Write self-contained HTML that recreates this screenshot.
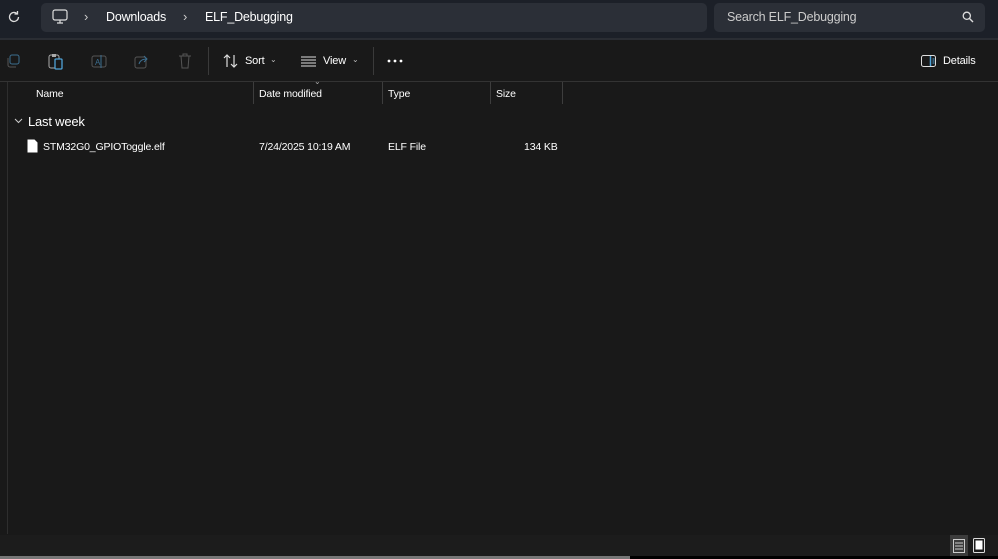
<!DOCTYPE html>
<html><head><style>
*{margin:0;padding:0;box-sizing:border-box}
body{width:998px;height:559px;background:#191919;font-family:"Segoe UI","Liberation Sans",sans-serif;color:#fff;position:relative;overflow:hidden;font-size:11px}
.top{position:absolute;left:0;top:0;width:998px;height:38px;background:#1c2028}
.addr{position:absolute;left:41px;top:3px;width:666px;height:29px;background:#2b2f37;border-radius:5px}
.search{position:absolute;left:714px;top:3px;width:271px;height:29px;background:#2b2f37;border-radius:5px}
.t{position:absolute;white-space:nowrap}
.tb{position:absolute;left:0;top:38px;width:998px;height:44px;background:#191919;border-top:2px solid #2a2d33;border-bottom:1px solid #333}
.sep{position:absolute;width:1px;background:#3a3a3a}
.col{position:absolute;top:82px;width:1px;height:22px;background:#3d3d3d}
.r{font-size:10.5px;letter-spacing:-0.15px}
</style></head><body>
<div class="top"></div>
<svg class="t" style="left:7px;top:10px" width="14" height="14" viewBox="0 0 14 14"><path d="M11.5 7a4.5 4.5 0 1 1-1.4-3.3" stroke="#ddd" stroke-width="1.3" fill="none"/><path d="M10.5 1v3h-3" stroke="#ddd" stroke-width="1.3" fill="none"/></svg>
<div class="addr"></div>
<svg class="t" style="left:52px;top:9px" width="16" height="15" viewBox="0 0 16 15"><rect x="1" y="1" width="14" height="10" rx="2" stroke="#ddd" stroke-width="1.2" fill="none"/><path d="M5 14h6M8 11v3" stroke="#ddd" stroke-width="1.2"/></svg>
<div class="t" style="left:84px;top:9px;font-size:13px;color:#ccc">›</div>
<div class="t" style="left:106px;top:10px;font-size:12.5px;letter-spacing:-0.2px">Downloads</div>
<div class="t" style="left:183px;top:9px;font-size:13px;color:#ccc">›</div>
<div class="t" style="left:205px;top:10px;font-size:12.5px;letter-spacing:-0.2px">ELF_Debugging</div>
<div class="search"></div>
<div class="t" style="left:727px;top:10px;font-size:12.5px;letter-spacing:-0.2px;color:#ccc">Search ELF_Debugging</div>
<svg class="t" style="left:962px;top:11px" width="12" height="12" viewBox="0 0 12 12"><circle cx="4.8" cy="4.8" r="3.6" stroke="#ddd" stroke-width="1.3" fill="none"/><path d="M7.5 7.5L11 11" stroke="#ddd" stroke-width="1.4"/></svg>
<div class="tb"></div>
<svg class="t" style="left:6px;top:54px" width="14" height="14"><rect x="4" y="1" width="9" height="9" rx="2" stroke="#3c6e8f" fill="none"/><path d="M2 4v7a2 2 0 0 0 2 2h6" stroke="#555" fill="none"/></svg>
<svg class="t" style="left:48px;top:53px" width="16" height="17"><rect x="1" y="2" width="10" height="13" rx="2" stroke="#aaa" fill="none"/><rect x="4" y="1" width="4" height="3" fill="#aaa"/><rect x="7" y="6" width="7" height="10" rx="1" stroke="#4fa3d8" stroke-width="1.3" fill="#191919"/></svg>
<svg class="t" style="left:91px;top:54px" width="16" height="15"><rect x="1" y="2" width="14" height="11" rx="2" stroke="#555" fill="none"/><text x="4" y="11" font-size="8" fill="#3c6e8f" font-family="Liberation Sans">A</text><path d="M10 1v13" stroke="#3c6e8f"/></svg>
<svg class="t" style="left:134px;top:54px" width="16" height="15"><rect x="1" y="3" width="11" height="11" rx="2" stroke="#555" fill="none"/><path d="M5 10c1-4 4-5 8-5M10 2l3 3-3 3" stroke="#3c6e8f" fill="none"/></svg>
<svg class="t" style="left:178px;top:53px" width="14" height="16"><path d="M1 3h12M5 3V1h4v2M3 3l1 12h6l1-12" stroke="#555" fill="none"/></svg>
<div class="sep" style="left:208px;top:47px;height:28px"></div>
<svg class="t" style="left:223px;top:54px" width="15" height="14"><path d="M4 13V1M1 4l3-3 3 3M11 1v12M8 10l3 3 3-3" stroke="#ddd" stroke-width="1.2" fill="none"/></svg>
<div class="t r" style="left:245px;top:55px;font-size:11px">Sort</div>
<div class="t" style="left:270px;top:55px;font-size:8px;color:#bbb">⌄</div>
<svg class="t" style="left:301px;top:56px" width="15" height="11"><path d="M0 1h15M0 4h15M0 7h15M0 10h15" stroke="#ddd"/></svg>
<div class="t r" style="left:323px;top:55px;font-size:11px">View</div>
<div class="t" style="left:352px;top:55px;font-size:8px;color:#bbb">⌄</div>
<div class="sep" style="left:373px;top:47px;height:28px"></div>
<svg class="t" style="left:387px;top:59px" width="16" height="4"><circle cx="2" cy="2" r="1.4" fill="#fff"/><circle cx="8" cy="2" r="1.4" fill="#fff"/><circle cx="14" cy="2" r="1.4" fill="#fff"/></svg>
<svg class="t" style="left:921px;top:55px" width="15" height="12"><rect x="0.5" y="0.5" width="14" height="11" rx="2" stroke="#ddd" fill="none"/><path d="M9.5 1v10" stroke="#4fa3d8" stroke-width="1.5"/><path d="M11.5 4h2M11.5 6h2M11.5 8h2" stroke="#4fa3d8"/></svg>
<div class="t r" style="left:943px;top:55px;font-size:11px">Details</div>
<div class="sep" style="left:7px;top:82px;height:452px;background:#2e2e2e"></div>
<div class="t r" style="left:36px;top:88px">Name</div>
<div class="col" style="left:253px"></div>
<div class="t" style="left:314px;top:77px;font-size:8px;color:#aaa">⌄</div>
<div class="t r" style="left:259px;top:88px">Date modified</div>
<div class="col" style="left:382px"></div>
<div class="t r" style="left:388px;top:88px">Type</div>
<div class="col" style="left:490px"></div>
<div class="t r" style="left:496px;top:88px">Size</div>
<div class="col" style="left:562px"></div>
<svg class="t" style="left:14px;top:118px" width="9" height="6"><path d="M1 1l3.5 3.5L8 1" stroke="#ccc" fill="none"/></svg>
<div class="t" style="left:28px;top:114px;font-size:13px;letter-spacing:-0.2px">Last week</div>
<svg class="t" style="left:27px;top:139px" width="11" height="14"><path d="M0.5 0.5h7l3 3v10h-10z" fill="#fff"/></svg>
<div class="t r" style="left:43px;top:141px">STM32G0_GPIOToggle.elf</div>
<div class="t r" style="left:259px;top:141px">7/24/2025 10:19 AM</div>
<div class="t r" style="left:388px;top:141px">ELF File</div>
<div class="t r" style="left:524px;top:141px">134 KB</div>
<div class="t" style="left:0;top:535px;width:998px;height:21px;background:#1c1c1c"></div>
<div class="t" style="left:950px;top:535px;width:18px;height:21px;background:#3c3c3c"></div>
<svg class="t" style="left:953px;top:539px" width="12" height="14"><rect x="0.5" y="0.5" width="11" height="13" fill="none" stroke="#ccc"/><path d="M2 4h8M2 7h8M2 10h8" stroke="#ccc"/></svg>
<svg class="t" style="left:973px;top:538px" width="12" height="15"><rect x="0.5" y="0.5" width="11" height="14" rx="1" fill="none" stroke="#ddd"/><rect x="2.5" y="2.5" width="7" height="9" fill="#fff"/></svg>
<div class="t" style="left:0;top:556px;width:630px;height:3px;background:#777"></div>
<div class="t" style="left:630px;top:556px;width:368px;height:3px;background:#000"></div>
</body></html>
